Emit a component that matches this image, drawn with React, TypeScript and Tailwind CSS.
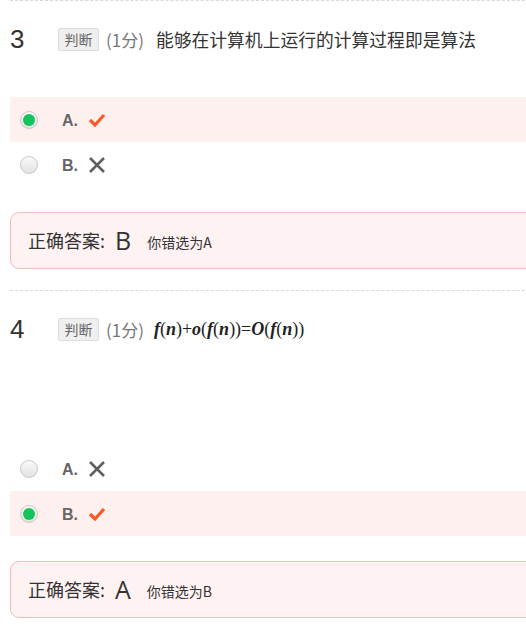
import React from "react";

type Opt = { label: string; correct: boolean; picked: boolean };

function Radio({ on }: { on: boolean }) {
  return (
    <span className="flex h-[18px] w-[18px] items-center justify-center rounded-full border border-[#c8c8c8] bg-gradient-to-b from-[#fafafa] to-[#e2e2e2]">
      {on && <span className="h-[12px] w-[12px] rounded-full bg-[#16c35a]" />}
    </span>
  );
}

function Tick() {
  return (
    <svg width="18" height="16" viewBox="0 0 18 16">
      <polyline points="2,8 7,13 16,3" fill="none" stroke="#fb5a25" strokeWidth="3.2" strokeLinejoin="miter" />
    </svg>
  );
}

function Cross() {
  return (
    <svg width="18" height="18" viewBox="0 0 18 18">
      <path d="M2 2 L16 16 M16 2 L2 16" stroke="#606060" strokeWidth="2.6" />
    </svg>
  );
}

function Options({ opts }: { opts: Opt[] }) {
  return (
    <div>
      {opts.map((o) => (
        <div key={o.label} className={`flex h-[45px] items-center pl-[10px] ${o.picked ? "bg-[#fff0f0]" : ""}`}>
          <Radio on={o.picked} />
          <span className="ml-[24px] w-[26px] pt-[2px] font-['Liberation_Sans',sans-serif] text-[16px] font-bold text-[#666]">
            {o.label}.
          </span>
          {o.correct ? <Tick /> : <Cross />}
        </div>
      ))}
    </div>
  );
}

function Answer({ right, wrong }: { right: string; wrong: string }) {
  return (
    <div className="mt-[25px] flex h-[57px] items-center rounded-[9px] border border-[#f4bdbd] bg-[#fff2f2] pl-[17px] text-[#333]">
      <span className="text-[18px]">正确答案:</span>
      <span className="ml-[10px] font-['Open_Sans','Noto_Sans',sans-serif] text-[25px] leading-none">{right}</span>
      <span className="ml-[16px] pt-[3px] text-[14px]">你错选为{wrong}</span>
    </div>
  );
}

function Header({ num, children }: { num: string; children: React.ReactNode }) {
  return (
    <div className="flex h-[23px] items-center">
      <span className="w-[48px] font-['Liberation_Sans',sans-serif] text-[26px] text-[#333]">{num}</span>
      <span className="flex h-[23px] w-[41px] items-center justify-center rounded-[2px] border border-[#ddd] bg-[#efefef] text-[14px] text-[#666]">
        判断
      </span>
      <span className="ml-[7px] text-[17px] text-[#777]">(1分)</span>
      {children}
    </div>
  );
}

const I = ({ t }: { t: string }) => <span className="font-bold italic">{t}</span>;

export default function App() {
  return (
    <div className="w-[526px] overflow-hidden bg-white font-['Noto_Sans_CJK_SC',sans-serif]">
      <div className="ml-[10px] w-[560px]">
        <div className="border-t border-dashed border-[#d8d8d8] pt-[27px]">
          <Header num="3">
            <span className="ml-[12px] text-[17.8px] text-[#333]">能够在计算机上运行的计算过程即是算法</span>
          </Header>
          <div className="mt-[46px]">
            <Options
              opts={[
                { label: "A", correct: true, picked: true },
                { label: "B", correct: false, picked: false },
              ]}
            />
          </div>
          <Answer right="B" wrong="A" />
        </div>

        <div className="mt-[21px] border-t border-dashed border-[#d8d8d8] pt-[27px]">
          <Header num="4">
            <span className="ml-[10px] font-['Liberation_Serif',serif] text-[18px] text-[#222]">
              <I t="f" />(<I t="n" />)+<I t="o" />(<I t="f" />(<I t="n" />))=<I t="O" />(<I t="f" />(<I t="n" />))
            </span>
          </Header>
          <div className="mt-[105px]">
            <Options
              opts={[
                { label: "A", correct: false, picked: false },
                { label: "B", correct: true, picked: true },
              ]}
            />
          </div>
          <Answer right="A" wrong="B" />
        </div>
      </div>
    </div>
  );
}
